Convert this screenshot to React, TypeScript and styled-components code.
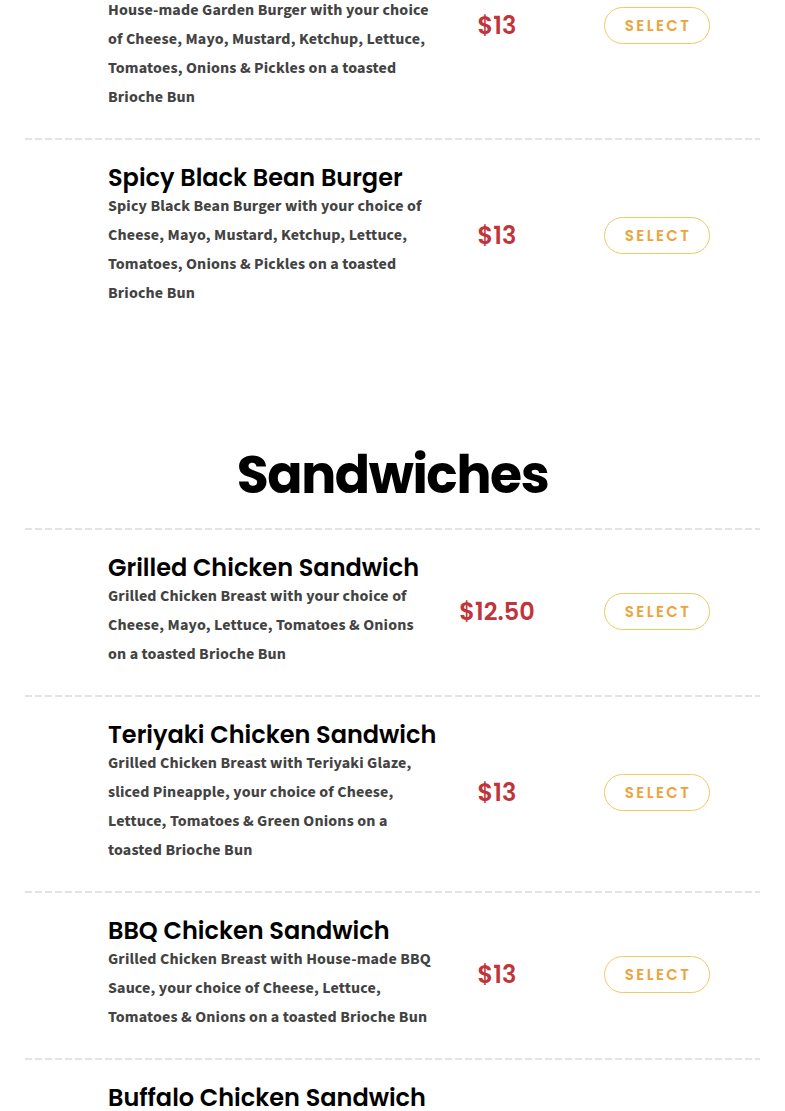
import styled, { createGlobalStyle } from "styled-components";

const GlobalStyle = createGlobalStyle`
  body {
    margin: 0;
    background: #fff;
  }
`;

const Page = styled.main`
  padding: 0 25px;
  margin-top: -87px;
`;

const Section = styled.section`
  & + & {
    margin-top: 110px;
  }
`;

const SectionTitle = styled.h2`
  margin: 0 0 22px;
  text-align: center;
  font-family: Poppins, Inter, "Noto Sans", sans-serif;
  font-weight: 700;
  font-size: 52px;
  line-height: 62px;
  color: #000;
  letter-spacing: -1.4px;
`;

const Item = styled.article`
  display: grid;
  grid-template-columns: 325px 128px 107px;
  align-items: center;
  padding: 25px 0 26px 83px;
  background-image: repeating-linear-gradient(
    to right,
    #e3e3e3 0 7px,
    transparent 7px 10px
  );
  background-size: 100% 2px;
  background-repeat: no-repeat;
  background-position: top left;
`;

const Info = styled.div`
  display: flex;
  flex-direction: column;
  align-items: flex-start;
`;

const Name = styled.h3`
  margin: 0;
  width: max-content;
  max-width: 340px;
  font-family: Poppins, Inter, "Noto Sans", sans-serif;
  font-weight: 600;
  font-size: 24px;
  line-height: 29px;
  color: #000;
`;

const Desc = styled.p`
  margin: 0;
  font-family: "Source Sans Pro", "Source Sans 3", Lato, "Noto Sans", sans-serif;
  font-weight: 700;
  font-size: 16px;
  line-height: 29px;
  color: #434343;
  letter-spacing: 0.15px;
`;

const Price = styled.div`
  text-align: center;
  font-family: Poppins, Inter, "Noto Sans", sans-serif;
  font-weight: 600;
  font-size: 24px;
  color: #c0343a;
`;

const SelectButton = styled.button`
  margin-left: 43px;
  width: 106px;
  height: 37px;
  border-radius: 999px;
  border: 1px solid #f2c863;
  background: #fff;
  color: #eea33a;
  font-family: Poppins, Inter, "Noto Sans", sans-serif;
  font-weight: 600;
  font-size: 15px;
  letter-spacing: 2.4px;
  text-transform: uppercase;
  padding: 0 0 0 2px;
  cursor: pointer;
`;

type MenuItem = {
  name: string;
  desc: string;
  price: string;
};

const burgers: MenuItem[] = [
  {
    name: "House-made Veggie Garden Burger",
    desc: "House-made Garden Burger with your choice of Cheese, Mayo, Mustard, Ketchup, Lettuce, Tomatoes, Onions & Pickles on a toasted Brioche Bun",
    price: "$13",
  },
  {
    name: "Spicy Black Bean Burger",
    desc: "Spicy Black Bean Burger with your choice of Cheese, Mayo, Mustard, Ketchup, Lettuce, Tomatoes, Onions & Pickles on a toasted Brioche Bun",
    price: "$13",
  },
];

const sandwiches: MenuItem[] = [
  {
    name: "Grilled Chicken Sandwich",
    desc: "Grilled Chicken Breast with your choice of Cheese, Mayo, Lettuce, Tomatoes & Onions on a toasted Brioche Bun",
    price: "$12.50",
  },
  {
    name: "Teriyaki Chicken Sandwich",
    desc: "Grilled Chicken Breast with Teriyaki Glaze, sliced Pineapple, your choice of Cheese, Lettuce, Tomatoes & Green Onions on a toasted Brioche Bun",
    price: "$13",
  },
  {
    name: "BBQ Chicken Sandwich",
    desc: "Grilled Chicken Breast with House-made BBQ Sauce, your choice of Cheese, Lettuce, Tomatoes & Onions on a toasted Brioche Bun",
    price: "$13",
  },
  {
    name: "Buffalo Chicken Sandwich",
    desc: "Grilled Chicken Breast tossed in Buffalo Sauce, your choice of Cheese, Lettuce, Tomatoes & Onions on a toasted Brioche Bun",
    price: "$13",
  },
];

const Row = ({ item }: { item: MenuItem }) => (
  <Item>
    <Info>
      <Name>{item.name}</Name>
      <Desc>{item.desc}</Desc>
    </Info>
    <Price>{item.price}</Price>
    <SelectButton type="button">Select</SelectButton>
  </Item>
);

const App = () => (
  <>
    <GlobalStyle />
    <Page>
      <Section>
        {burgers.map((b) => (
          <Row key={b.name} item={b} />
        ))}
      </Section>
      <Section>
        <SectionTitle>Sandwiches</SectionTitle>
        {sandwiches.map((s) => (
          <Row key={s.name} item={s} />
        ))}
      </Section>
    </Page>
  </>
);

export default App;
